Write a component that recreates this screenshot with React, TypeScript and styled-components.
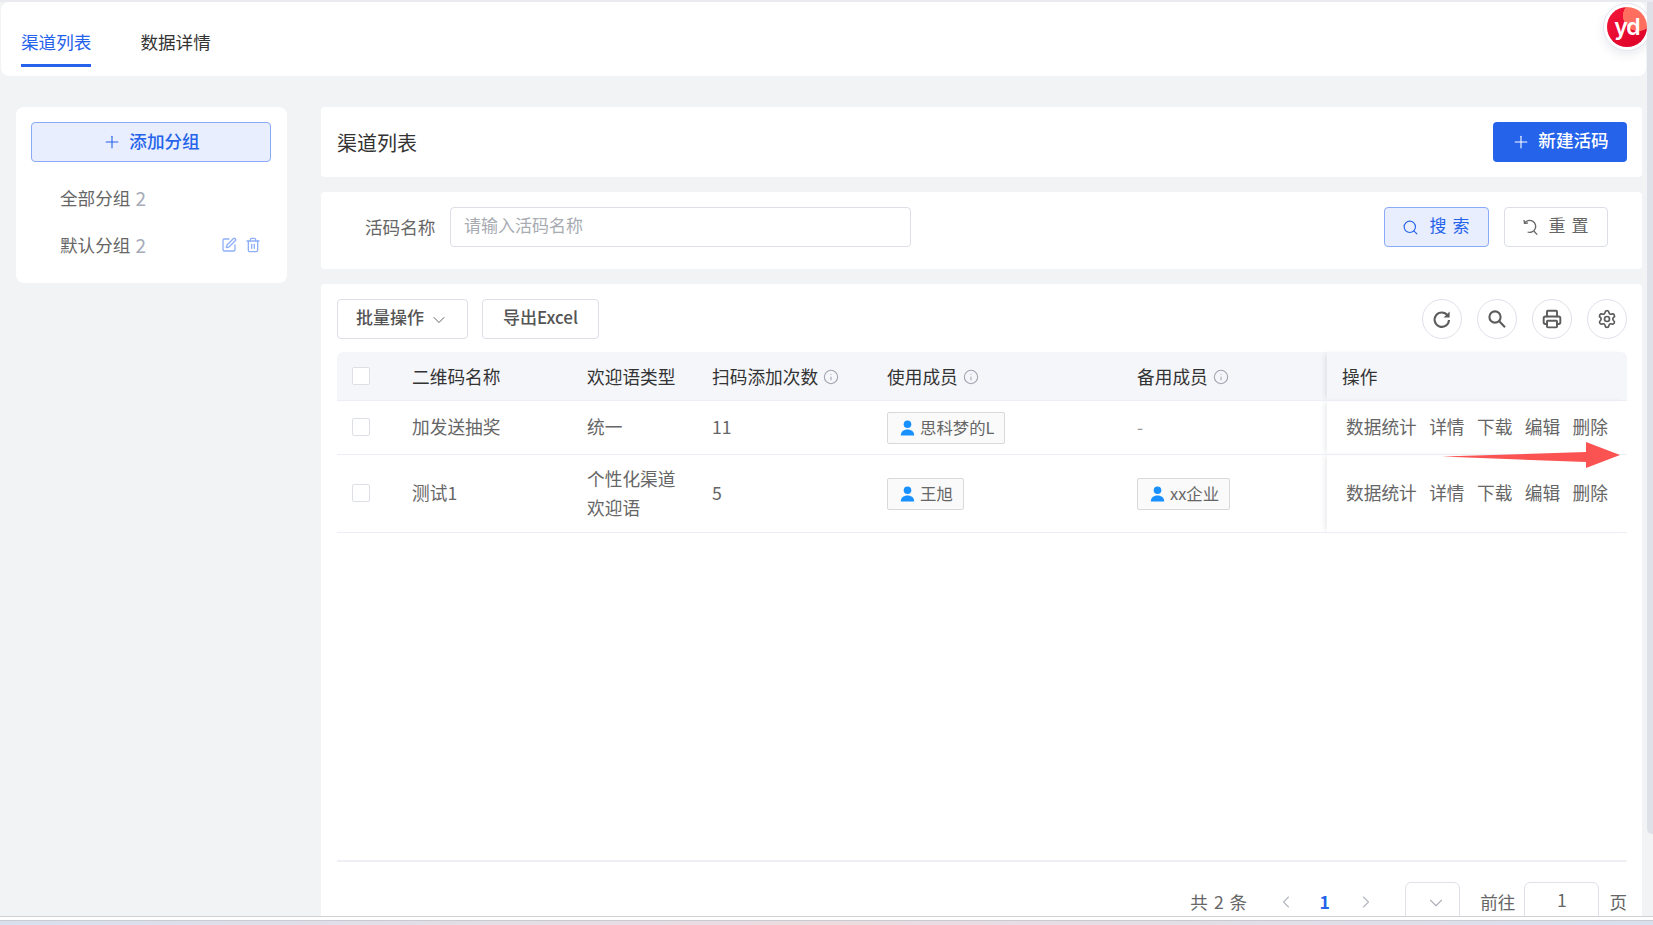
import { ChevronDown, ChevronLeft, ChevronRight, Info, Plus, Printer, Search, Settings, SquarePen, Trash2 } from 'lucide-react';
import styled, { createGlobalStyle } from 'styled-components';

const GlobalStyle = createGlobalStyle`
  html, body {
    margin: 0;
    padding: 0;
    background: #f2f3f5;
    font-family: "Noto Sans CJK SC", "Liberation Sans", sans-serif;
    overflow: hidden;
  }
  * {
    box-sizing: border-box;
  }
`;

const Page = styled.div`
  width: 1653px;
  height: 925px;
  display: flex;
  flex-direction: column;
  overflow: hidden;
`;

const Viewport = styled.div`
  position: relative;
  height: 916px;
  display: flex;
  flex-direction: column;
  padding: 2px 7px 0 1px;
  background: #f2f3f5;
  border-top: 2px solid #e9ebf0;
  overflow: hidden;
`;

const ScrollThumb = styled.div`
  position: absolute;
  top: 0;
  right: 0;
  width: 6px;
  height: 832px;
  border-radius: 0 0 0 5px;
  background: #dfe1e8;
`;

const BrowserEdge = styled.div`
  height: 9px;
  background: linear-gradient(#ffffff 0 3px, #c9cbd0 3px 4px, transparent 4px),
    linear-gradient(90deg, #d8e0ee, #ecdcdf 50%, #d8e0ee);
  border-top: 1px solid #cfd0d2;
`;

const TabBar = styled.div`
  height: 74px;
  margin-top: -2px;
  display: flex;
  gap: 49px;
  padding-left: 20px;
  background: #ffffff;
  border-radius: 8px;
  flex-shrink: 0;
`;

const Tab = styled.div<{ $active?: boolean }>`
  height: 65px;
  padding-top: 26px;
  font-size: 17.6px;
  line-height: 28px;
  color: ${({ $active }) => ($active ? '#2563eb' : '#333333')};
  border-bottom: 3px solid ${({ $active }) => ($active ? '#2563eb' : 'transparent')};
`;

const LogoBadge = styled.div`
  position: absolute;
  top: 1px;
  right: 2px;
  width: 48px;
  height: 48px;
  display: flex;
  align-items: center;
  justify-content: center;
  border-radius: 50%;
  background: #ffffff;
  border: 1px solid #e4e6f2;
  box-shadow: 0 4px 10px rgba(60, 70, 110, 0.1);
`;

const LogoMark = styled.div`
  width: 40px;
  height: 40px;
  border-radius: 50%;
  display: flex;
  align-items: center;
  justify-content: center;
  background: radial-gradient(circle at 78% 22%, #ff6e5e 0 34%, transparent 35%),
    linear-gradient(135deg, #f5173a, #dc0027);
  color: #ffffff;
  font-family: "Inter", sans-serif;
  font-size: 23px;
  font-weight: 600;
  letter-spacing: -1px;
  line-height: 36px;
`;

const Body = styled.div`
  flex: 1;
  min-height: 0;
  display: flex;
  align-items: flex-start;
  gap: 34px;
  padding: 31px 4px 0 15px;
`;

const Sidebar = styled.aside`
  width: 271px;
  height: 176px;
  flex-shrink: 0;
  padding: 15px 15px 0;
  background: #ffffff;
  border-radius: 8px;
`;

const GhostButton = styled.button`
  display: inline-flex;
  align-items: center;
  justify-content: center;
  gap: 7px;
  height: 40px;
  padding: 0 0 4px;
  background: #e8eefd;
  border: 1px solid #8aaaf5;
  border-radius: 4px;
  color: #2563eb;
  font-family: inherit;
  font-size: 17.6px;
  font-weight: 500;
  svg {
    margin-top: 4px;
  }
`;

const AddGroupButton = styled(GhostButton)`
  width: 240px;
  margin-bottom: 12px;
`;

const GroupRow = styled.div`
  height: 47px;
  display: flex;
  align-items: center;
  padding-left: 29px;
  padding-right: 11px;
  font-size: 17.6px;
  color: #666666;
`;

const GroupCount = styled.span`
  margin-left: 5px;
  font-size: 19px;
  color: #a6abb8;
`;

const GroupActions = styled.div`
  margin-left: auto;
  display: flex;
  gap: 8px;
  color: #8fb0f8;
`;

const Main = styled.main`
  flex: 1;
  min-width: 0;
  height: 100%;
  display: flex;
  flex-direction: column;
  gap: 15px;
`;

const TitleCard = styled.section`
  height: 70px;
  flex-shrink: 0;
  display: flex;
  align-items: center;
  justify-content: space-between;
  padding: 0 15px 0 16px;
  background: #ffffff;
  border-radius: 4px;
`;

const Title = styled.h2`
  margin: 0;
  font-size: 20px;
  font-weight: 400;
  color: #333333;
`;

const PrimaryButton = styled.button`
  width: 134px;
  height: 40px;
  display: inline-flex;
  align-items: center;
  justify-content: center;
  gap: 7px;
  padding: 0 0 5px;
  background: #2563eb;
  border: none;
  border-radius: 4px;
  color: #ffffff;
  font-family: inherit;
  font-size: 17.6px;
  font-weight: 500;
  svg {
    margin-top: 5px;
  }
`;

const FilterCard = styled.section`
  height: 77px;
  flex-shrink: 0;
  display: flex;
  align-items: flex-start;
  padding: 15px 34px 0 44px;
  background: #ffffff;
  border-radius: 4px;
`;

const FilterLabel = styled.label`
  width: 85px;
  line-height: 40px;
  font-size: 17.6px;
  color: #666666;
`;

const TextInput = styled.input`
  width: 461px;
  height: 40px;
  padding: 0 13px 6px;
  border: 1px solid #dcdfe8;
  border-radius: 4px;
  font-family: inherit;
  font-size: 17px;
  outline: none;
  &::placeholder {
    color: #a8abb2;
  }
`;

const SearchButton = styled(GhostButton)`
  width: 105px;
  margin-left: auto;
  gap: 11px;
  padding: 0 0 5px 4px;
  font-size: 17px;
  font-weight: 400;
  letter-spacing: 6px;
  svg {
    margin-top: 5px;
  }
`;

const ResetButton = styled.button`
  width: 104px;
  height: 40px;
  margin-left: 15px;
  display: inline-flex;
  align-items: center;
  justify-content: center;
  gap: 10px;
  padding: 0 0 5px 4px;
  background: #ffffff;
  border: 1px solid #dcdfe8;
  border-radius: 4px;
  color: #666666;
  font-family: inherit;
  font-size: 17px;
  letter-spacing: 6px;
  svg {
    margin-top: 5px;
  }
`;

const TableCard = styled.section`
  flex: 1;
  min-height: 0;
  padding: 15px 15px 0 16px;
  background: #ffffff;
  border-radius: 4px 4px 0 0;
`;

const Toolbar = styled.div`
  height: 40px;
  margin-bottom: 13px;
  display: flex;
  align-items: center;
  gap: 14px;
`;

const OutlineButton = styled.button<{ $width: number }>`
  width: ${({ $width }) => $width}px;
  height: 40px;
  padding: 0 0 5px;
  display: inline-flex;
  align-items: center;
  justify-content: center;
  gap: 5px;
  background: #ffffff;
  border: 1px solid #dcdfe8;
  border-radius: 4px;
  color: #555555;
  font-family: inherit;
  font-size: 17px;
  font-weight: 500;
  svg {
    margin-top: 6px;
  }
`;

const ToolIcons = styled.div`
  margin-left: auto;
  display: flex;
  gap: 15px;
`;

const RoundButton = styled.button`
  width: 40px;
  height: 40px;
  padding: 0;
  display: flex;
  align-items: center;
  justify-content: center;
  background: #ffffff;
  border: 1px solid #dfe1ea;
  border-radius: 50%;
  color: #5c5c5c;
`;

const TableArea = styled.div`
  height: 510px;
  border-bottom: 2px solid #eef0f6;
`;

const Table = styled.table`
  width: 1290px;
  border-collapse: collapse;
  table-layout: fixed;
  font-size: 17.7px;
  color: #666666;
`;

const HeadRow = styled.tr`
  height: 48px;
  background: #f5f6fa;
  border-bottom: 1px solid #eceef5;
`;

const HeadCell = styled.th<{ $action?: boolean }>`
  padding: 0 0 0 15px;
  text-align: left;
  font-weight: 400;
  color: #333333;
  ${({ $action }) => $action && 'box-shadow: -4px 0 5px -2px rgba(40, 50, 80, 0.1);'}
  &:last-child {
    border-top-right-radius: 6px;
  }
  &:first-child {
    border-top-left-radius: 6px;
  }
`;

const HeadInfo = styled.span`
  display: inline-flex;
  align-items: center;
  gap: 5px;
  color: #a0a4b0;
  svg {
    margin-top: 3px;
  }
`;

const HeadText = styled.span`
  color: #333333;
`;

const Row = styled.tr<{ $tall?: boolean }>`
  height: ${({ $tall }) => ($tall ? '78px' : '54px')};
  border-bottom: 1px solid #eceef5;
`;

const Cell = styled.td<{ $action?: boolean }>`
  padding: 0 0 0 ${({ $action }) => ($action ? '19px' : '15px')};
  line-height: 29.5px;
  ${({ $action }) => $action && 'box-shadow: -4px 0 5px -2px rgba(40, 50, 80, 0.1);'}
`;

const Check = styled.input.attrs({ type: 'checkbox' })`
  appearance: none;
  display: block;
  width: 18px;
  height: 18px;
  margin: 0;
  background: #ffffff;
  border: 1px solid #dcdfe6;
  border-radius: 2px;
`;

const MemberTag = styled.span`
  display: inline-flex;
  align-items: center;
  gap: 5px;
  height: 32px;
  padding: 0 10px 0 12px;
  background: #fafafa;
  border: 1px solid #d9d9d9;
  border-radius: 2px;
  font-size: 16.4px;
  color: #666666;
  vertical-align: middle;
`;

const Dash = styled.span`
  color: #999999;
`;

const Actions = styled.div`
  display: flex;
  gap: 12.4px;
`;

const Pager = styled.div`
  margin-top: 20px;
  display: flex;
  justify-content: flex-end;
  align-items: center;
  height: 40px;
  font-size: 17.6px;
  color: #666666;
`;

const PagerText = styled.span`
  padding-bottom: 2px;
`;

const Total = styled(PagerText)`
  margin-right: 27px;
  white-space: pre;
  word-spacing: 2px;
`;

const PageArrow = styled.span`
  width: 24px;
  display: flex;
  justify-content: center;
  color: #b4b7c0;
`;

const PageNumber = styled.span`
  width: 56px;
  padding: 0 3px 2px 0;
  text-align: center;
  color: #2563eb;
  font-weight: 700;
`;

const PageSize = styled.div`
  width: 55px;
  height: 40px;
  margin-left: 27px;
  padding: 2px 0 0 6px;
  display: flex;
  align-items: center;
  justify-content: center;
  border: 1px solid #dfe1ea;
  border-radius: 6px;
  color: #b0b3bc;
`;

const JumpLabel = styled(PagerText)`
  margin-left: 20px;
  margin-right: 9px;
`;

const JumpInput = styled.div`
  width: 75px;
  height: 40px;
  border: 1px solid #dfe1ea;
  border-radius: 6px;
  text-align: center;
  line-height: 34px;
`;

const JumpUnit = styled(PagerText)`
  margin-left: 10px;
`;

const Arrow = styled.svg`
  position: absolute;
  left: 1442px;
  top: 433px;
  width: 179px;
  height: 40px;
`;

const PersonIcon = () => (
  <svg width="15" height="16" viewBox="0 0 15 16" fill="#1890ff">
    <circle cx="7.5" cy="4.2" r="3.8" />
    <path d="M0.8 15.5c0-3.8 2.6-6 6.7-6s6.7 2.2 6.7 6z" />
  </svg>
);

const ResetIcon = () => (
  <svg width="17" height="17" viewBox="0 0 17 17" fill="none" stroke="#666666" strokeWidth="1.3">
    <path d="M2.6 4.2A6 6 0 1 1 5.6 13" />
    <path d="M2 1l.5 3.4 3.4-.4" />
    <path d="M11.8 12l3.4 3.6" />
  </svg>
);

const RefreshIcon = () => (
  <svg width="20" height="20" viewBox="0 0 20 20" fill="none">
    <path d="M15.6 6.4A7.2 7.2 0 1 0 17 11" stroke="#5c5c5c" strokeWidth="2.1" />
    <path d="M17.6 2.4V8.4H11.6z" fill="#5c5c5c" />
  </svg>
);

const LensIcon = () => (
  <svg width="20" height="20" viewBox="0 0 20 20" fill="none" stroke="#5c5c5c" strokeWidth="2.1">
    <circle cx="8" cy="8" r="5.6" />
    <path d="M12 12l6 6.2" />
  </svg>
);

type Rule = { name: string; type: string[]; count: number; member: string; backup?: string };

const RULES: Rule[] = [
  { name: '加发送抽奖', type: ['统一'], count: 11, member: '思科梦的L' },
  { name: '测试1', type: ['个性化渠道', '欢迎语'], count: 5, member: '王旭', backup: 'xx企业' },
];

const ACTIONS = ['数据统计', '详情', '下载', '编辑', '删除'];

const App = () => (
  <Page>
    <GlobalStyle />
    <Viewport>
      <TabBar>
        <Tab $active>渠道列表</Tab>
        <Tab>数据详情</Tab>
      </TabBar>
      <Body>
        <Sidebar>
          <AddGroupButton>
            <Plus size={20} strokeWidth={1.3} />
            添加分组
          </AddGroupButton>
          <GroupRow>
            全部分组<GroupCount>2</GroupCount>
          </GroupRow>
          <GroupRow>
            默认分组<GroupCount>2</GroupCount>
            <GroupActions>
              <SquarePen size={16} />
              <Trash2 size={16} />
            </GroupActions>
          </GroupRow>
        </Sidebar>
        <Main>
          <TitleCard>
            <Title>渠道列表</Title>
            <PrimaryButton>
              <Plus size={20} strokeWidth={1.3} />
              新建活码
            </PrimaryButton>
          </TitleCard>
          <FilterCard>
            <FilterLabel>活码名称</FilterLabel>
            <TextInput placeholder="请输入活码名称" />
            <SearchButton>
              <Search size={17} strokeWidth={1.6} />
              搜索
            </SearchButton>
            <ResetButton>
              <ResetIcon />
              重置
            </ResetButton>
          </FilterCard>
          <TableCard>
            <Toolbar>
              <OutlineButton $width={131}>
                批量操作
                <ChevronDown size={20} strokeWidth={1.1} />
              </OutlineButton>
              <OutlineButton $width={117}>导出Excel</OutlineButton>
              <ToolIcons>
                <RoundButton>
                  <RefreshIcon />
                </RoundButton>
                <RoundButton>
                  <LensIcon />
                </RoundButton>
                <RoundButton>
                  <Printer size={20} strokeWidth={2.3} />
                </RoundButton>
                <RoundButton>
                  <Settings size={20} strokeWidth={2} />
                </RoundButton>
              </ToolIcons>
            </Toolbar>
            <TableArea>
              <Table>
                <colgroup>
                  <col width={60} />
                  <col width={175} />
                  <col width={125} />
                  <col width={175} />
                  <col width={250} />
                  <col width={205} />
                  <col width={300} />
                </colgroup>
                <thead>
                  <HeadRow>
                    <HeadCell>
                      <Check />
                    </HeadCell>
                    <HeadCell>二维码名称</HeadCell>
                    <HeadCell>欢迎语类型</HeadCell>
                    <HeadCell>
                      <HeadInfo>
                        <HeadText>扫码添加次数</HeadText>
                        <Info size={16} strokeWidth={1.6} />
                      </HeadInfo>
                    </HeadCell>
                    <HeadCell>
                      <HeadInfo>
                        <HeadText>使用成员</HeadText>
                        <Info size={16} strokeWidth={1.6} />
                      </HeadInfo>
                    </HeadCell>
                    <HeadCell>
                      <HeadInfo>
                        <HeadText>备用成员</HeadText>
                        <Info size={16} strokeWidth={1.6} />
                      </HeadInfo>
                    </HeadCell>
                    <HeadCell $action>操作</HeadCell>
                  </HeadRow>
                </thead>
                <tbody>
                  {RULES.map((rule) => (
                    <Row key={rule.name} $tall={rule.type.length > 1}>
                      <Cell>
                        <Check />
                      </Cell>
                      <Cell>{rule.name}</Cell>
                      <Cell>
                        {rule.type.map((line) => (
                          <div key={line}>{line}</div>
                        ))}
                      </Cell>
                      <Cell>{rule.count}</Cell>
                      <Cell>
                        <MemberTag>
                          <PersonIcon />
                          {rule.member}
                        </MemberTag>
                      </Cell>
                      <Cell>
                        {rule.backup ? (
                          <MemberTag>
                            <PersonIcon />
                            {rule.backup}
                          </MemberTag>
                        ) : (
                          <Dash>-</Dash>
                        )}
                      </Cell>
                      <Cell $action>
                        <Actions>
                          {ACTIONS.map((action) => (
                            <span key={action}>{action}</span>
                          ))}
                        </Actions>
                      </Cell>
                    </Row>
                  ))}
                </tbody>
              </Table>
            </TableArea>
            <Pager>
              <Total>共 2 条</Total>
              <PageArrow>
                <ChevronLeft size={20} strokeWidth={1.3} />
              </PageArrow>
              <PageNumber>1</PageNumber>
              <PageArrow>
                <ChevronRight size={20} strokeWidth={1.3} />
              </PageArrow>
              <PageSize>
                <ChevronDown size={22} strokeWidth={1.3} />
              </PageSize>
              <JumpLabel>前往</JumpLabel>
              <JumpInput>1</JumpInput>
              <JumpUnit>页</JumpUnit>
            </Pager>
          </TableCard>
        </Main>
      </Body>
      <LogoBadge>
        <LogoMark>yd</LogoMark>
      </LogoBadge>
      <ScrollThumb />
      <Arrow viewBox="0 0 179 40">
        <path d="M0 21.5L144 17V7L178 20L144 33V27z" fill="#fb5252" />
      </Arrow>
    </Viewport>
    <BrowserEdge />
  </Page>
);

export default App;
